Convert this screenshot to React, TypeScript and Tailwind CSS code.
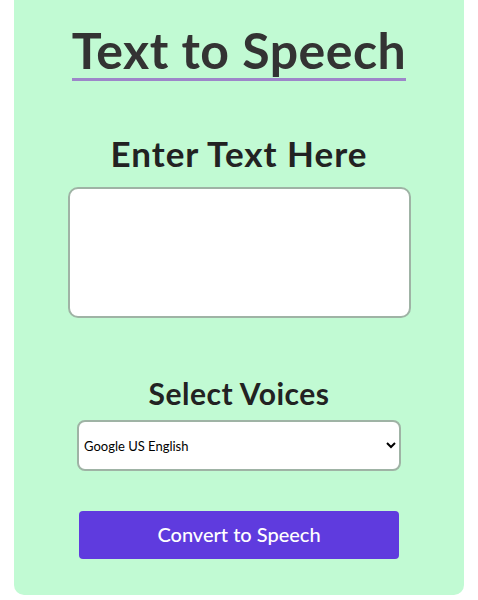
import React from 'react';

const font = { fontFamily: 'Lato, "Noto Sans", sans-serif' };

const App = () => {
  return (
    <div className="w-[478px] h-[600px] bg-white px-[14px]" style={font}>
      <div className="h-[595px] bg-[#c1fad3] rounded-b-[10px] flex flex-col items-center">
        <h1 className="mt-[22px] text-[50px] leading-[56px] font-bold text-[#333333] border-b-[3px] border-[#9d86c9] tracking-[0.5px]">
          Text to Speech
        </h1>
        <h2 className="mt-[50px] text-[35px] leading-[44px] font-bold text-[#222222] tracking-[1px]">
          Enter Text Here
        </h2>
        <textarea className="mt-[12px] w-[343px] h-[131px] bg-white border-2 border-[#9fb3a5] rounded-[10px] resize-none outline-none" />
        <h2 className="mt-[56px] text-[30px] leading-[38px] font-bold text-[#222222] tracking-[0.5px]">
          Select Voices
        </h2>
        <select className="mt-[8px] w-[324px] h-[51px] bg-white border-2 border-[#9fb3a5] rounded-[8px] text-[13px] text-black px-[1px] outline-none">
          <option>Google US English</option>
        </select>
        <button
          type="button"
          className="mt-[40px] w-[320px] h-[48px] bg-[#5f3bde] rounded-[4px] text-white text-[20px] font-medium leading-[24px] pb-[2px]"
        >
          Convert to Speech
        </button>
      </div>
    </div>
  );
};

export default App;
